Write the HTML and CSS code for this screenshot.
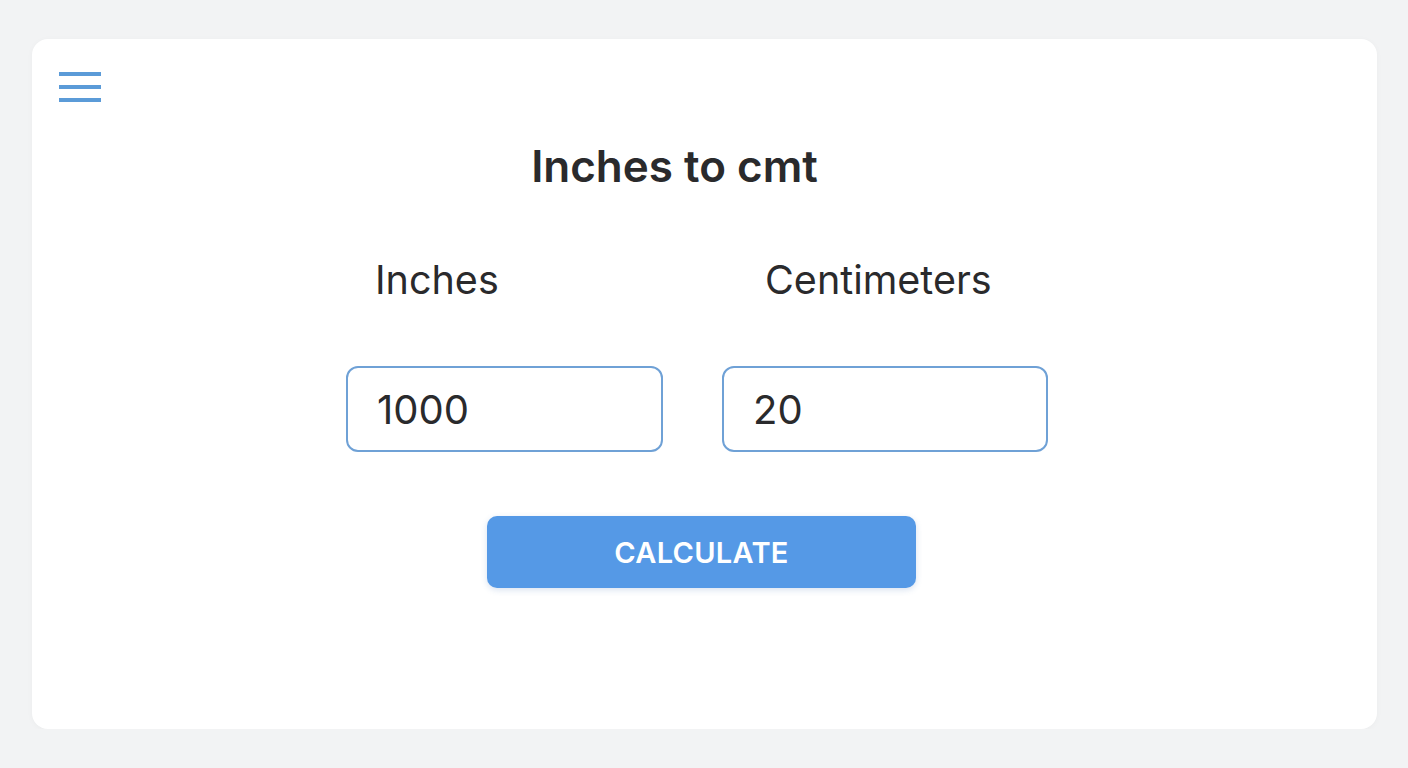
FILE: index.html
```html
<!DOCTYPE html>
<html lang="en">
<head>
    <meta charset="UTF-8">
    <meta name="viewport" content="width=device-width, initial-scale=1.0">
    <title>Inches to cmt</title>
    <link rel="stylesheet" href="styles.css">
</head>
<body>
<div class="card">
    <div class="menu">
        <span></span>
        <span></span>
        <span></span>
    </div>

    <h1 class="title">Inches to cmt</h1>

    <div class="converter">
        <label class="label label-in" for="inches">Inches</label>
        <label class="label label-cm" for="cm">Centimeters</label>
        <input class="field" id="inches" type="text" value="1000">
        <input class="field" id="cm" type="text" value="20">
    </div>

    <div class="actions">
        <button class="calc">CALCULATE</button>
    </div>
</div>
</body>
</html>
```

FILE: styles.css
```css
body {
    margin: 0;
    background-color: #f2f3f4;
    font-family: Inter, "Noto Sans", sans-serif;
    color: #2a2a2c;
}

.card {
    box-sizing: border-box;
    height: 690px;
    margin: 39px 31px 0 32px;
    padding: 33px 27px;
    background-color: #fff;
    border-radius: 16px;
    box-shadow: 0 1px 6px 0 rgba(0,0,0,0.03);
}

.menu {
    display: flex;
    flex-direction: column;
    gap: 9px;
    width: 42px;
}

.menu span {
    display: block;
    height: 4px;
    background-color: #5b9bd8;
}

.title {
    margin: 38px 60px 0 0;
    font-size: 44px;
    font-weight: 600;
    line-height: 52px;
    text-align: center;
}

.converter {
    display: grid;
    grid-template-columns: 317px 326px;
    column-gap: 59px;
    justify-content: center;
    margin: 65px 15px 0 0;
}

.label {
    font-size: 39.5px;
    line-height: 46px;
    margin-bottom: 63px;
}

.label-in {
    padding-left: 29px;
}

.label-cm {
    padding-left: 43px;
}

.field {
    box-sizing: border-box;
    width: 100%;
    height: 86px;
    padding: 0 29px;
    border: 2px solid #6fa1d6;
    border-radius: 12px;
    font-family: inherit;
    font-size: 40px;
    color: #2a2a2c;
    outline: none;
}

.actions {
    display: flex;
    justify-content: center;
    margin-top: 64px;
    padding-right: 6px;
}

.calc {
    width: 429px;
    height: 72px;
    border: none;
    border-radius: 10px;
    background-color: #5599e6;
    color: #fff;
    font-family: inherit;
    font-size: 29px;
    font-weight: 600;
    letter-spacing: 0.3px;
    box-shadow: 0 2px 6px rgba(60,110,180,0.2);
    cursor: pointer;
}
```
